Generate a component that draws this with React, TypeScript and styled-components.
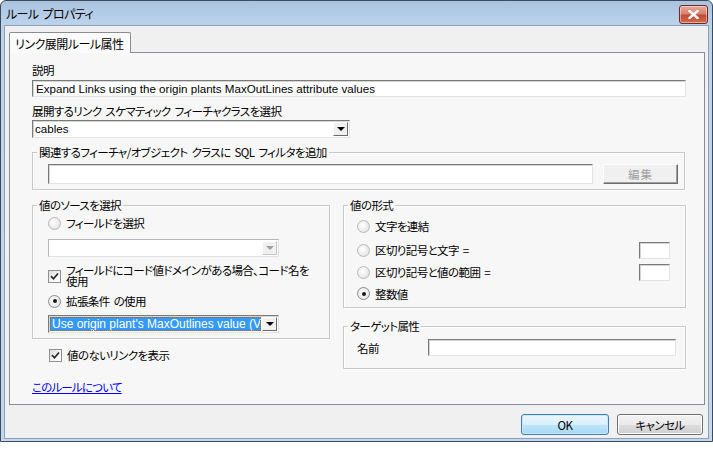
import styled, { createGlobalStyle, css } from "styled-components";

const GlobalStyle = createGlobalStyle`
  html, body {
    margin: 0;
    padding: 0;
    background: #ffffff;
  }
  body {
    font-family: "Noto Sans CJK JP", "Liberation Sans", sans-serif;
    font-size: 11.5px;
    color: #000;
    font-feature-settings: "palt";
    word-spacing: 2px;
  }
`;

// ウィンドウ枠
const Window = styled.div`
  width: 713px;
  height: 442px;
  box-sizing: border-box;
  border: 1px solid #3d4a5a;
  border-radius: 6px 6px 0 0;
  background: linear-gradient(180deg, #a9c3df 0px, #bcd3ec 24px, #c3d8ee 100%);
  display: flex;
  flex-direction: column;
  padding: 0 3px 2px 3px;
`;

const TitleBar = styled.div`
  height: 24px;
  display: flex;
  align-items: center;
  justify-content: space-between;
  padding: 0 1px 0 2px;
`;

const Title = styled.div`
  font-size: 12px;
  letter-spacing: -0.6px;
  padding-top: 1px;
`;

const CloseButton = styled.div`
  width: 27px;
  height: 17px;
  margin-top: 2px;
  border: 1px solid #6d2a22;
  border-radius: 3px;
  background: linear-gradient(180deg, #e9a99c 0%, #d9826f 45%, #c24a33 55%, #d66c4f 100%);
  box-shadow: inset 0 0 0 1px rgba(255, 255, 255, 0.45);
  display: flex;
  align-items: center;
  justify-content: center;
`;

const Client = styled.div`
  flex: 1;
  background: #f0f0f0;
  border: 1px solid #8aa0b8;
  display: flex;
  flex-direction: column;
  padding: 6px 3px 0 4px;
`;

const TabStrip = styled.div`
  display: flex;
  height: 20px;
  position: relative;
  z-index: 1;
`;

const Tab = styled.div`
  height: 21px;
  box-sizing: border-box;
  padding: 0 6px 0 5px;
  border: 1px solid #898c95;
  border-bottom: none;
  border-radius: 2px 2px 0 0;
  background: #fbfbfb;
  display: flex;
  align-items: center;
  letter-spacing: -0.5px;
  font-size: 12px;
  white-space: nowrap;
`;

const TabPanel = styled.div`
  height: 353px;
  box-sizing: border-box;
  border: 1px solid #898c95;
  background: #f7f7f7;
  padding: 10px 19px 0 22px;
  display: flex;
  flex-direction: column;
`;

const Label = styled.div<{ $mt?: number }>`
  line-height: 14px;
  margin-top: ${(p) => p.$mt ?? 0}px;
  letter-spacing: -0.6px;
  white-space: nowrap;
`;

const sunken = css`
  box-sizing: border-box;
  background: #ffffff;
  border-top: 1px solid #7a7a7a;
  border-left: 1px solid #7a7a7a;
  border-right: 1px solid #e3e3e3;
  border-bottom: 1px solid #e3e3e3;
  box-shadow: inset 1px 1px 0 #d5d5d5;
`;

const TextBox = styled.div<{ $w?: number; $h?: number; $mt?: number }>`
  ${sunken};
  width: ${(p) => (p.$w ? `${p.$w}px` : "100%")};
  height: ${(p) => p.$h ?? 17}px;
  margin-top: ${(p) => p.$mt ?? 0}px;
  font-family: "Liberation Sans", sans-serif;
  font-size: 11.6px;
  line-height: 15px;
  word-spacing: 0;
  padding-left: 3px;
  white-space: nowrap;
  overflow: hidden;
  flex-shrink: 0;
`;

const Combo = styled.div<{ $w: number; $mt?: number; $disabled?: boolean }>`
  ${sunken};
  width: ${(p) => p.$w}px;
  height: 18px;
  margin-top: ${(p) => p.$mt ?? 0}px;
  display: flex;
  align-items: stretch;
  padding: 1px;
  ${(p) =>
    p.$disabled &&
    css`
      border-top-color: #b5b5b5;
      border-left-color: #b5b5b5;
      box-shadow: none;
    `}
`;

const ComboText = styled.div<{ $selected?: boolean }>`
  flex: 1;
  font-family: "Liberation Sans", sans-serif;
  font-size: 11.6px;
  line-height: 14px;
  word-spacing: 0;
  padding-left: 1px;
  white-space: nowrap;
  overflow: hidden;
  box-sizing: border-box;
  ${(p) =>
    p.$selected &&
    css`
      background: #3399ff;
      color: #ffffff;
      font-size: 12px;
      outline: 1px dotted #c05a00;
      outline-offset: -1px;
      padding-left: 2px;
      margin-right: 1px;
    `}
`;

const DropButton = styled.div<{ $disabled?: boolean }>`
  width: 15px;
  box-sizing: border-box;
  background: #f0f0f0;
  border-top: 1px solid #ffffff;
  border-left: 1px solid #ffffff;
  border-right: 1px solid #6b6b6b;
  border-bottom: 1px solid #6b6b6b;
  display: flex;
  align-items: center;
  justify-content: center;
  ${(p) =>
    p.$disabled &&
    css`
      border-right-color: #c8c8c8;
      border-bottom-color: #c8c8c8;
    `}
`;

const Arrow = styled.div<{ $disabled?: boolean }>`
  width: 0;
  height: 0;
  border-left: 4px solid transparent;
  border-right: 4px solid transparent;
  border-top: 4px solid ${(p) => (p.$disabled ? "#a0a0a0" : "#000")};
`;

const Group = styled.fieldset<{ $mt?: number; $pb?: number }>`
  margin: ${(p) => p.$mt ?? 0}px 0 0 0;
  padding: 0 0 ${(p) => p.$pb ?? 5}px 0;
  border: 1px solid #c8c8c8;
  box-shadow: inset 1px 1px 0 #ffffff, 1px 1px 0 #ffffff;
  min-width: 0;
`;

const Legend = styled.legend`
  margin-left: 4px;
  padding: 0 2px;
  line-height: 14px;
  letter-spacing: -0.6px;
  white-space: nowrap;
`;

const GroupBody = styled.div<{ $pl: number; $pr?: number }>`
  padding: 0 ${(p) => p.$pr ?? 8}px 0 ${(p) => p.$pl}px;
  display: flex;
  flex-direction: column;
`;

const Row = styled.div<{ $mt?: number; $h?: number }>`
  display: flex;
  align-items: center;
  height: ${(p) => p.$h ?? 16}px;
  margin-top: ${(p) => p.$mt ?? 0}px;
  flex-shrink: 0;
`;

const RadioMark = styled.span<{ $checked?: boolean }>`
  width: 11px;
  height: 11px;
  border-radius: 50%;
  border: 1px solid ${(p) => (p.$checked ? "#8b8b8b" : "#b9b9b9")};
  background: radial-gradient(circle at 40% 40%, #ffffff 0%, #e6e6e6 70%, #d6d6d6 100%);
  display: flex;
  align-items: center;
  justify-content: center;
  margin-right: 5px;
  flex-shrink: 0;
  &::after {
    content: "";
    width: 4px;
    height: 4px;
    border-radius: 50%;
    background: ${(p) => (p.$checked ? "#1a1a1a" : "transparent")};
  }
`;

const CheckMark = styled.span`
  width: 11px;
  height: 11px;
  border: 1px solid #8e8f8f;
  background: linear-gradient(135deg, #dcdcdc 0%, #f6f6f6 60%, #ffffff 100%);
  display: flex;
  align-items: center;
  justify-content: center;
  margin-right: 5px;
  flex-shrink: 0;
`;

const RowText = styled.span`
  letter-spacing: -0.6px;
  white-space: nowrap;
`;

const WrapText = styled.span`
  line-height: 11px;
  letter-spacing: -0.6px;
  width: 252px;
`;

const Columns = styled.div`
  display: flex;
  gap: 13px;
  align-items: flex-start;
  margin-top: 8px;
`;

const Column = styled.div<{ $w: number }>`
  width: ${(p) => p.$w}px;
  display: flex;
  flex-direction: column;
  flex-shrink: 0;
`;

const SmallBox = styled.div`
  ${sunken};
  width: 31px;
  height: 17px;
  margin-left: auto;
`;

const HelpLink = styled.a`
  color: #0000ff;
  text-decoration: underline;
  letter-spacing: -0.8px;
  line-height: 14px;
  margin-top: 17px;
  cursor: pointer;
`;

const EditButton = styled.div`
  width: 75px;
  height: 20px;
  box-sizing: border-box;
  margin-left: 10px;
  background: #f0f0f0;
  border-top: 1px solid #ffffff;
  border-left: 1px solid #ffffff;
  border-right: 1px solid #6b6b6b;
  border-bottom: 1px solid #6b6b6b;
  box-shadow: inset -1px -1px 0 #a0a0a0;
  color: #a0a0a0;
  display: flex;
  align-items: center;
  justify-content: center;
  letter-spacing: 1px;
`;

const Footer = styled.div`
  display: flex;
  justify-content: flex-end;
  gap: 8px;
  margin-top: 9px;
  padding-right: 2px;
`;

const Button = styled.div<{ $primary?: boolean; $w: number }>`
  width: ${(p) => p.$w}px;
  height: 21px;
  box-sizing: border-box;
  border-radius: 3px;
  display: flex;
  align-items: center;
  justify-content: center;
  letter-spacing: -0.6px;
  ${(p) =>
    p.$primary
      ? css`
          border: 1px solid #3c7fb1;
          background: linear-gradient(180deg, #eaf6fd 0%, #d9f0fc 50%, #bee6fd 51%, #a7d9f5 100%);
          box-shadow: inset 0 0 0 1px #c7e8f9;
        `
      : css`
          border: 1px solid #707070;
          background: linear-gradient(180deg, #f2f2f2 0%, #ebebeb 50%, #dddddd 51%, #cfcfcf 100%);
          box-shadow: inset 0 0 0 1px #fcfcfc;
        `}
`;

function Check() {
  return (
    <svg width="9" height="9" viewBox="0 0 9 9">
      <path d="M1 4.2 L3.5 6.8 L8 1.5" fill="none" stroke="#2a2a2a" strokeWidth="1.7" />
    </svg>
  );
}

export default function App() {
  return (
    <>
      <GlobalStyle />
      <Window>
        <TitleBar>
          <Title>ルール プロパティ</Title>
          <CloseButton>
            <svg width="11" height="9" viewBox="0 0 11 9">
              <path d="M1.5 1 L9.5 8 M9.5 1 L1.5 8" stroke="#ffffff" strokeWidth="2.4" strokeLinecap="square" />
            </svg>
          </CloseButton>
        </TitleBar>
        <Client>
          <TabStrip>
            <Tab>リンク展開ルール属性</Tab>
          </TabStrip>
          <TabPanel>
            <Label>説明</Label>
            <TextBox $mt={3} $w={654}>
              Expand Links using the origin plants MaxOutLines attribute values
            </TextBox>
            <Label $mt={7}>展開するリンク スケマティック フィーチャクラスを選択</Label>
            <Combo $w={318} $mt={2}>
              <ComboText>cables</ComboText>
              <DropButton>
                <Arrow />
              </DropButton>
            </Combo>

            <Group $mt={7} $pb={5}>
              <Legend>関連するフィーチャ/オブジェクト クラスに SQL フィルタを追加</Legend>
              <GroupBody $pl={15} $pr={6}>
                <Row $mt={5} $h={20}>
                  <TextBox $w={545} $h={20} />
                  <EditButton>編集</EditButton>
                </Row>
              </GroupBody>
            </Group>

            <Columns>
              <Column $w={298}>
                <Group $pb={5}>
                  <Legend>値のソースを選択</Legend>
                  <GroupBody $pl={15}>
                    <Row $mt={3}>
                      <RadioMark />
                      <RowText>フィールドを選択</RowText>
                    </Row>
                    <Combo $w={231} $mt={8} $disabled>
                      <ComboText />
                      <DropButton $disabled>
                        <Arrow $disabled />
                      </DropButton>
                    </Combo>
                    <Row $mt={8} $h={22}>
                      <CheckMark>
                        <Check />
                      </CheckMark>
                      <WrapText>フィールドにコード値ドメインがある場合、コード名を使用</WrapText>
                    </Row>
                    <Row $mt={6}>
                      <RadioMark $checked />
                      <RowText>拡張条件 の使用</RowText>
                    </Row>
                    <Combo $w={231} $mt={6}>
                      <ComboText $selected>Use origin plant's MaxOutlines value (V</ComboText>
                      <DropButton>
                        <Arrow />
                      </DropButton>
                    </Combo>
                  </GroupBody>
                </Group>
                <Row $mt={8} style={{ paddingLeft: 17 }}>
                  <CheckMark>
                    <Check />
                  </CheckMark>
                  <RowText>値のないリンクを表示</RowText>
                </Row>
                <HelpLink>このルールについて</HelpLink>
              </Column>

              <Column $w={343}>
                <Group $pb={3}>
                  <Legend>値の形式</Legend>
                  <GroupBody $pl={13} $pr={15}>
                    <Row $mt={3} $h={22}>
                      <RadioMark />
                      <RowText>文字を連結</RowText>
                    </Row>
                    <Row $mt={2} $h={22}>
                      <RadioMark />
                      <RowText>区切り記号と文字 =</RowText>
                      <SmallBox />
                    </Row>
                    <Row $h={22}>
                      <RadioMark />
                      <RowText>区切り記号と値の範囲 =</RowText>
                      <SmallBox />
                    </Row>
                    <Row $h={21}>
                      <RadioMark $checked />
                      <RowText>整数値</RowText>
                    </Row>
                  </GroupBody>
                </Group>
                <Group $mt={11} $pb={12}>
                  <Legend>ターゲット属性</Legend>
                  <GroupBody $pl={13} $pr={9}>
                    <Row $mt={6} $h={17}>
                      <RowText style={{ width: 71 }}>名前</RowText>
                      <TextBox $w={248} $h={17} />
                    </Row>
                  </GroupBody>
                </Group>
              </Column>
            </Columns>
          </TabPanel>
          <Footer>
            <Button $primary $w={88}>OK</Button>
            <Button $w={86}>キャンセル</Button>
          </Footer>
        </Client>
      </Window>
    </>
  );
}
